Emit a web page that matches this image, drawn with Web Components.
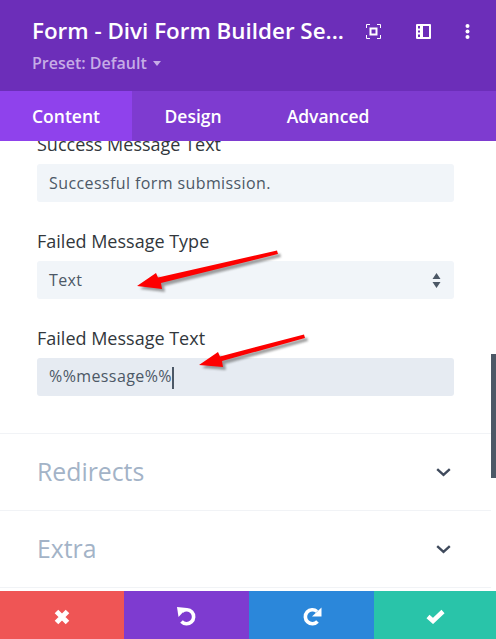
<!DOCTYPE html>
<html>
<head>
<meta charset="utf-8">
<title>Form - Divi Form Builder Settings</title>
<style>
  html, body { margin: 0; height: 100%; background: #fff; }
  body { font-family: "Open Sans", sans-serif; overflow: hidden; }
</style>
</head>
<body>
<settings-modal>
  <modal-header slot="header" title="Form - Divi Form Builder Se..." preset="Preset: Default"></modal-header>
  <modal-tabs slot="tabs" tabs="Content,Design,Advanced"></modal-tabs>

  <form-field label="Success Message Text" value="Successful form submission."></form-field>
  <form-field label="Failed Message Type" value="Text" type="select"></form-field>
  <form-field label="Failed Message Text" value="%%message%%" focused></form-field>

  <toggle-row slot="toggles" label="Redirects"></toggle-row>
  <toggle-row slot="toggles" label="Extra"></toggle-row>

  <modal-footer slot="footer"></modal-footer>
</settings-modal>

<script>
class SettingsModal extends HTMLElement {
  constructor() {
    super();
    this.attachShadow({ mode: "open" });
  }

  connectedCallback() {
    this.shadowRoot.innerHTML = `
      <style>
        :host {
          display: grid;
          grid-template-rows: 91px 50px 450px 48px;
          width: 496px;
          height: 639px;
          position: relative;
          overflow: hidden;
        }
        .body {
          position: relative;
          overflow: hidden;
          padding-right: 5px;
        }
        .fields {
          display: flex;
          flex-direction: column;
          gap: 28px;
          padding: 0 37px;
          margin-top: -8px;
          height: 300px;
          box-sizing: border-box;
        }
        .toggles {
          display: flex;
          flex-direction: column;
          border-bottom: 1px solid #f1f3f6;
        }
        .thumb {
          position: absolute;
          right: 0;
          top: 213px;
          width: 5px;
          height: 124px;
          background: #4c5866;
        }
        svg.notes {
          position: absolute;
          left: 0;
          top: 0;
          pointer-events: none;
        }
      </style>
      <slot name="header"></slot>
      <slot name="tabs"></slot>
      <div class="body">
        <div class="fields"><slot></slot></div>
        <div class="toggles"><slot name="toggles"></slot></div>
        <div class="thumb"></div>
      </div>
      <slot name="footer"></slot>
      <svg class="notes" width="496" height="639" viewBox="0 0 496 639">
        <defs>
          <filter id="soft" x="-20%" y="-50%" width="140%" height="200%">
            <feGaussianBlur stdDeviation="1"/>
          </filter>
        </defs>
        <g fill="#555" opacity="0.55" filter="url(#soft)" transform="translate(3 3)">
          <polygon points="137,286 156,273 158,277.5 277,250.5 278,254 161,283 162,289"/>
          <polygon points="199,365 218,352 220,356.5 304,334.5 305,338 222,361 223,367"/>
        </g>
        <g fill="#fd0000">
          <polygon points="137,286 156,273 158,277.5 277,250.5 278,254 161,283 162,289"/>
          <polygon points="199,365 218,352 220,356.5 304,334.5 305,338 222,361 223,367"/>
        </g>
      </svg>
    `;
  }
}

class ModalHeader extends HTMLElement {
  constructor() {
    super();
    this.attachShadow({ mode: "open" });
  }

  connectedCallback() {
    this.shadowRoot.innerHTML = `
      <style>
        :host {
          display: block;
          background: #6c2eb9;
          color: #fff;
          font-family: "Open Sans", sans-serif;
          height: 91px;
          box-sizing: border-box;
          padding: 15px 21px 0 32px;
        }
        .top {
          display: flex;
          align-items: center;
          height: 32px;
        }
        h1 {
          margin: 0;
          width: 313px;
          font-size: 22.400px;
          font-weight: 600;
          line-height: 32px;
          white-space: nowrap;
          flex: none;
        }
        .icons {
          display: flex;
          margin-left: 21px;
          gap: 35px;
          align-items: center;
        }
        svg { display: block; }
        .preset {
          margin-top: 6px;
          font-size: 16px;
          font-weight: 600;
          line-height: 20px;
          color: #c6ace6;
          display: flex;
          align-items: center;
          gap: 6px;
        }
        .caret {
          width: 0;
          height: 0;
          border: 4px solid transparent;
          border-top: 5px solid #c6ace6;
          border-bottom: 0;
          margin-top: 1px;
        }
      </style>
      <div class="top">
        <h1>${this.getAttribute("title")}</h1>
        <div class="icons">
          <svg width="15" height="15" viewBox="0 0 15 15" fill="none" stroke="#fff">
            <path d="M.5 4V.5H4M11 .5h3.500V4M14.500 11v3.500H11M4 14.500H.5V11"/>
            <rect x="4.500" y="4.500" width="6" height="6" stroke-width="2"/>
          </svg>
          <svg width="15" height="15" viewBox="0 0 15 15">
            <path fill="#fff" fill-rule="evenodd" d="M0 1a1 1 0 0 1 1-1h13a1 1 0 0 1 1 1v13a1 1 0 0 1-1 1H1a1 1 0 0 1-1-1zM2 2v2.500h2V2zm0 4.500v2h2v-2zm0 4v2.500h2v-2.500zM7 2v11h6V2z"/>
          </svg>
          <svg width="5" height="15" viewBox="0 0 5 15" fill="#fff" style="margin-left:-1px">
            <circle cx="2.500" cy="2" r="2"/>
            <circle cx="2.500" cy="7.500" r="2"/>
            <circle cx="2.500" cy="13" r="2"/>
          </svg>
        </div>
      </div>
      <div class="preset">${this.getAttribute("preset")}<span class="caret"></span></div>
    `;
  }
}

class ModalTabs extends HTMLElement {
  constructor() {
    super();
    this.attachShadow({ mode: "open" });
  }

  connectedCallback() {
    const tabs = this.getAttribute("tabs").split(",");
    this.shadowRoot.innerHTML = `
      <style>
        :host {
          display: flex;
          position: relative;
          z-index: 2;
          height: 50px;
          background: #7e3bd0;
          font-family: "Open Sans", sans-serif;
        }
        div {
          padding: 0 32.500px;
          color: #fff;
          font-size: 17.500px;
          font-weight: 600;
          line-height: 50px;
        }
        div.active { background: #8f42ec; padding: 0 32px; width: 68px; white-space: nowrap; }
      </style>
      ${tabs.map((t, i) => `<div class="${i === 0 ? "active" : ""}">${t}</div>`).join("")}
    `;
  }
}

class FormField extends HTMLElement {
  constructor() {
    super();
    this.attachShadow({ mode: "open" });
  }

  connectedCallback() {
    const isSelect = this.getAttribute("type") === "select";
    const focused = this.hasAttribute("focused");
    this.shadowRoot.innerHTML = `
      <style>
        :host {
          display: block;
          font-family: "Open Sans", sans-serif;
        }
        label {
          display: block;
          font-size: 18px;
          font-weight: 400;
          line-height: 22px;
          color: #32373c;
          margin-bottom: 9px;
        }
        .input {
          display: flex;
          align-items: center;
          justify-content: space-between;
          height: 38px;
          box-sizing: border-box;
          padding: 0 13px 0 12px;
          border-radius: 3px;
          background: ${focused ? "#e6ebf2" : "#f1f5f9"};
          color: #4c5866;
          font-size: 16px;
          letter-spacing: 0.4px;
          white-space: nowrap;
        }
        .caret {
          display: inline-block;
          width: 2px;
          height: 22px;
          background: #4c5866;
          vertical-align: middle;
        }
        svg { display: block; }
      </style>
      <label>${this.getAttribute("label")}</label>
      <div class="input">
        <span>${this.getAttribute("value")}${focused ? '<span class="caret"></span>' : ""}</span>
        ${isSelect ? `<svg width="9" height="15" viewBox="0 0 9 15" fill="#4c5866"><path d="M4.500 0L8.500 6H.5zM.5 9h8L4.500 15z"/></svg>` : ""}
      </div>
    `;
  }
}

class ToggleRow extends HTMLElement {
  constructor() {
    super();
    this.attachShadow({ mode: "open" });
  }

  connectedCallback() {
    this.shadowRoot.innerHTML = `
      <style>
        :host {
          display: flex;
          align-items: center;
          justify-content: space-between;
          height: 76px;
          padding: 0 40px 0 37px;
          border-top: 1px solid #f1f3f6;
          font-family: "Open Sans", sans-serif;
          font-size: 24.800px;
          color: #a3b3c7;
        }
        span { padding-bottom: 2px; }
        svg { display: block; }
      </style>
      <span>${this.getAttribute("label")}</span>
      <svg width="15" height="9" viewBox="0 0 15 9" fill="none" stroke="#3f4a5c" stroke-width="2.400"><path d="M1.200 1.200L7.500 6.800l6.300-5.600"/></svg>
    `;
  }
}

class ModalFooter extends HTMLElement {
  constructor() {
    super();
    this.attachShadow({ mode: "open" });
  }

  connectedCallback() {
    this.shadowRoot.innerHTML = `
      <style>
        :host {
          display: grid;
          grid-template-columns: 124px 125px 125px 122px;
          height: 48px;
        }
        div {
          display: flex;
          align-items: center;
          justify-content: center;
          padding-top: 3px;
        }
        svg { display: block; }
      </style>
      <div style="background:#ef5555">
        <svg width="16" height="16" viewBox="0 0 16 16" stroke="#fff" stroke-width="5" fill="none"><path d="M2.500 2.500l11 11M13.500 2.500l-11 11"/></svg>
      </div>
      <div style="background:#7e3bd0">
        <svg width="20" height="19" viewBox="0 0 20 19" fill="none">
          <path d="M5 4.500A7 7 0 1 1 4.500 14.500" stroke="#fff" stroke-width="3.600"/>
          <path d="M0 0L10 1 1.500 10z" fill="#fff"/>
        </svg>
      </div>
      <div style="background:#2b87da">
        <svg width="20" height="19" viewBox="0 0 20 19" fill="none">
          <path d="M15 4.500A7 7 0 1 0 15.500 14.500" stroke="#fff" stroke-width="3.600"/>
          <path d="M19.500.5V9.500H10z" fill="#fff"/>
        </svg>
      </div>
      <div style="background:#29c4a9">
        <svg width="19" height="15" viewBox="0 0 19 15" fill="none" stroke="#fff" stroke-width="4.500"><path d="M2 7.500l5 4.500L17 2.500"/></svg>
      </div>
    `;
  }
}

customElements.define("settings-modal", SettingsModal);
customElements.define("modal-header", ModalHeader);
customElements.define("modal-tabs", ModalTabs);
customElements.define("form-field", FormField);
customElements.define("toggle-row", ToggleRow);
customElements.define("modal-footer", ModalFooter);
</script>
</body>
</html>
